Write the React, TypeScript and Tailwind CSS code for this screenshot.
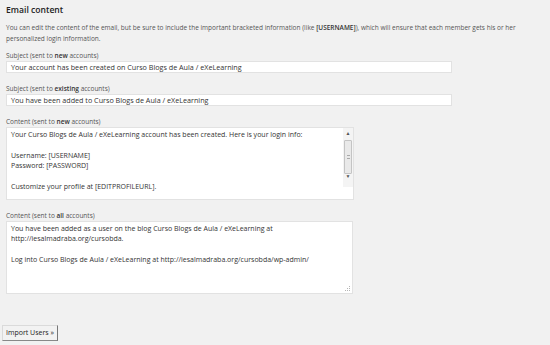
import * as React from "react";

const font = { fontFamily: '"Open Sans", "Liberation Sans", sans-serif' };

function ResizeGrip() {
  return (
    <svg width="6" height="6" viewBox="0 0 6 6" className="shrink-0">
      <g fill="#b5b5b5">
        <rect x="4" y="0" width="1" height="1" />
        <rect x="2" y="2" width="1" height="1" />
        <rect x="4" y="2" width="1" height="1" />
        <rect x="0" y="4" width="1" height="1" />
        <rect x="2" y="4" width="1" height="1" />
        <rect x="4" y="4" width="1" height="1" />
      </g>
    </svg>
  );
}

function FakeScrollbar() {
  return (
    <div className="flex w-[10px] shrink-0 flex-col items-center bg-[#f4f4f4] pb-[8px]">
      <span className="mt-[3px] text-[5px] leading-[5px] text-[#555]">▲</span>
      <div className="mt-[4px] flex h-[34px] w-[8px] items-center justify-center rounded-[1px] border border-[#c4c4c4] bg-[#e9e9e9]">
        <div className="h-[4px] w-[3px] border-y border-[#aaa]" />
      </div>
      <div className="flex-1" />
      <span className="text-[5px] leading-[5px] text-[#555]">▼</span>
    </div>
  );
}

function Label({ label, strong }: { label: string; strong: string }) {
  return (
    <p className="text-[6.5px] leading-[10px] text-[#555]">
      {label} (sent to <b className="font-semibold text-[#333]">{strong}</b> accounts)
    </p>
  );
}

function TextInput({ value }: { value: string }) {
  return (
    <div className="flex h-[12px] w-[446px] items-center border border-[#e2e2e2] bg-white pl-[4px] text-[7.2px] leading-[10px] text-[#333]">
      {value}
    </div>
  );
}

export default function App() {
  return (
    <div className="h-[345px] w-[550px] overflow-hidden bg-[#f1f1f1] pl-[6px] pt-[3px]" style={font}>
      <h3 className="text-[8.6px] font-semibold leading-[14px] text-[#222]">Email content</h3>

      <p className="mt-[6px] w-[538px] text-[6.5px] leading-[10.5px] text-[#555]">
        You can edit the content of the email, but be sure to include the important bracketed information (like{" "}
        <b className="font-semibold text-[#333]">[USERNAME]</b>), which will ensure that each member gets his or her personalized
        login information.
      </p>

      <div className="mt-[7px]">
        <Label label="Subject" strong="new" />
        <TextInput value="Your account has been created on Curso Blogs de Aula / eXeLearning" />
      </div>

      <div className="mt-[11px]">
        <Label label="Subject" strong="existing" />
        <TextInput value="You have been added to Curso Blogs de Aula / eXeLearning" />
      </div>

      <div className="mt-[11px]">
        <Label label="Content" strong="new" />
        <div className="flex h-[73px] w-[348px] border border-[#e2e2e2] bg-white">
          <div className="flex-1 overflow-hidden pl-[4px] pt-[1.5px] text-[7px] leading-[10.6px] text-[#333]">
            <p>Your Curso Blogs de Aula / eXeLearning account has been created. Here is your login info:</p>
            <p className="h-[10.6px]" />
            <p>Username: [USERNAME]</p>
            <p>Password: [PASSWORD]</p>
            <p className="h-[10.6px]" />
            <p>Customize your profile at [EDITPROFILEURL].</p>
          </div>
          <div className="flex flex-col">
            <FakeScrollbar />
          </div>
        </div>
      </div>

      <div className="mt-[11px]">
        <Label label="Content" strong="all" />
        <div className="flex h-[73px] w-[347px] flex-col border border-[#e2e2e2] bg-white">
          <div className="flex-1 overflow-hidden pl-[4px] pt-[1.5px] text-[7px] leading-[10.6px] text-[#333]">
            <p>You have been added as a user on the blog Curso Blogs de Aula / eXeLearning at</p>
            <p>http://iesalmadraba.org/cursobda.</p>
            <p className="h-[10.6px]" />
            <p>Log into Curso Blogs de Aula / eXeLearning at http://iesalmadraba.org/cursobda/wp-admin/</p>
          </div>
          <div className="flex justify-end pb-[1px] pr-[1px]">
            <ResizeGrip />
          </div>
        </div>
      </div>

      <button
        className="-ml-[4px] mt-[31px] flex h-[16px] w-[56px] items-center justify-center border border-[#dadada] border-b-[#888] border-r-[#777] bg-[#f2f2f2] text-[7px] text-[#222]"
        style={font}
      >
        Import Users »
      </button>
    </div>
  );
}
